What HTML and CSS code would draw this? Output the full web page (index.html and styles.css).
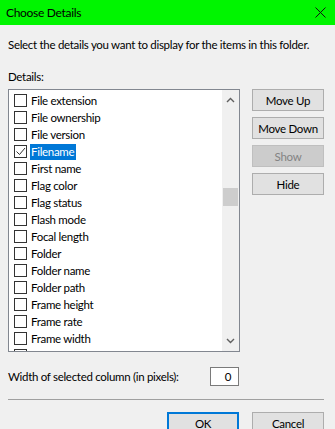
FILE: index.html
```html
<!DOCTYPE html>
<html lang="en">
<head>
  <meta charset="UTF-8" />
  <title>Choose Details</title>
  <link rel="stylesheet" href="styles.css">
</head>
<body>
  <div class="dialog">
    <div class="titlebar">
      <span class="title">Choose Details</span>
      <svg class="close" width="11" height="11" viewBox="0 0 11 11">
        <path d="M0.5 0.5 L10.5 10.5 M10.5 0.5 L0.5 10.5" stroke="#111" stroke-width="1" fill="none"/>
      </svg>
    </div>
    <div class="content">
      <p class="intro">Select the details you want to display for the items in this folder.</p>
      <p class="label">Details:</p>
      <div class="main">
        <div class="listbox">
          <div class="rows">
            <div class="row"><span class="check"></span><span class="name">File extension</span></div>
            <div class="row"><span class="check"></span><span class="name">File ownership</span></div>
            <div class="row"><span class="check"></span><span class="name">File version</span></div>
            <div class="row"><span class="check checked">
              <svg width="11" height="11" viewBox="0 0 11 11"><path d="M1.5 5.5 L4.5 8.5 L10 2" stroke="#333" stroke-width="1" fill="none"/></svg>
            </span><span class="name selected">Filename</span></div>
            <div class="row"><span class="check"></span><span class="name">First name</span></div>
            <div class="row"><span class="check"></span><span class="name">Flag color</span></div>
            <div class="row"><span class="check"></span><span class="name">Flag status</span></div>
            <div class="row"><span class="check"></span><span class="name">Flash mode</span></div>
            <div class="row"><span class="check"></span><span class="name">Focal length</span></div>
            <div class="row"><span class="check"></span><span class="name">Folder</span></div>
            <div class="row"><span class="check"></span><span class="name">Folder name</span></div>
            <div class="row"><span class="check"></span><span class="name">Folder path</span></div>
            <div class="row"><span class="check"></span><span class="name">Frame height</span></div>
            <div class="row"><span class="check"></span><span class="name">Frame rate</span></div>
            <div class="row"><span class="check"></span><span class="name">Frame width</span></div>
            <div class="row"><span class="check"></span><span class="name"></span></div>
          </div>
          <div class="scrollbar">
            <svg class="arrow" width="9" height="6" viewBox="0 0 9 6"><path d="M1 5 L4.5 1.5 L8 5" stroke="#606060" stroke-width="1.4" fill="none"/></svg>
            <div class="track"><div class="thumb"></div></div>
            <svg class="arrow" width="9" height="6" viewBox="0 0 9 6"><path d="M1 1 L4.5 4.5 L8 1" stroke="#606060" stroke-width="1.4" fill="none"/></svg>
          </div>
        </div>
        <div class="side-buttons">
          <button class="btn">Move Up</button>
          <button class="btn">Move Down</button>
          <button class="btn disabled">Show</button>
          <button class="btn">Hide</button>
        </div>
      </div>
      <div class="width-row">
        <span class="width-label">Width of selected column (in pixels):</span>
        <span class="num-input">0</span>
      </div>
      <div class="separator"></div>
      <div class="footer">
        <button class="btn default">OK</button>
        <button class="btn">Cancel</button>
      </div>
    </div>
  </div>
</body>
</html>
```

FILE: styles.css
```css
* {
  margin: 0;
  padding: 0;
  box-sizing: border-box;
}
body {
  background: #f0f0f0;
  font-family: 'Lato', sans-serif;
  font-size: 11.5px;
  letter-spacing: -0.3px;
  color: #000;
  overflow: hidden;
}
.dialog {
  width: 335px;
  height: 429px;
  overflow: hidden;
}
.titlebar {
  height: 25px;
  background: #00f500;
  display: flex;
  align-items: center;
  justify-content: space-between;
  padding: 0 9px 0 6px;
}
.title {
  font-size: 12px;
  line-height: 16px;
}
.close {
  display: block;
}
.content {
  padding: 0 11px 0 8px;
}
.intro {
  margin-top: 12px;
  line-height: 16px;
  white-space: nowrap;
}
.label {
  margin-top: 16px;
  line-height: 16px;
}
.main {
  display: flex;
  align-items: flex-start;
  margin-top: 4px;
}
.listbox {
  width: 232px;
  height: 263px;
  border: 1px solid #828790;
  background: #fff;
  display: flex;
  overflow: hidden;
}
.rows {
  flex: 1;
  padding: 2px 0 0 5px;
  overflow: hidden;
}
.row {
  height: 17px;
  display: flex;
  align-items: center;
}
.check {
  width: 13px;
  height: 13px;
  border: 1px solid #333;
  background: #fff;
  display: flex;
  align-items: center;
  justify-content: center;
}
.check svg {
  display: block;
}
.name {
  margin-left: 3px;
  padding: 0 2px 0 1px;
  line-height: 16px;
  white-space: nowrap;
}
.name.selected {
  background: #0078d7;
  color: #fff;
}
.scrollbar {
  width: 17px;
  background: #f0f0f0;
  display: flex;
  flex-direction: column;
  align-items: center;
}
.arrow {
  display: block;
  margin: 7px 0;
}
.track {
  flex: 1;
  width: 100%;
  padding-top: 78px;
}
.thumb {
  height: 18px;
  margin: 0 1px;
  background: #cdcdcd;
}
.side-buttons {
  margin-left: 12px;
  display: flex;
  flex-direction: column;
  gap: 6px;
}
.btn {
  width: 72px;
  height: 22px;
  font-family: 'Lato', sans-serif;
  font-size: 11.5px;
  letter-spacing: -0.3px;
  color: #000;
  background: #e1e1e1;
  border: 1px solid #adadad;
}
.btn.disabled {
  background: #cccccc;
  border-color: #bfbfbf;
  color: #838383;
}
.btn.default {
  border: 2px solid #0078d7;
}
.width-row {
  margin-top: 15px;
  display: flex;
  align-items: center;
  justify-content: space-between;
  width: 231px;
}
.width-label {
  white-space: nowrap;
}
.num-input {
  width: 29px;
  height: 19px;
  border: 1px solid #7a7a7a;
  background: #fff;
  text-align: right;
  padding-right: 7px;
  line-height: 17px;
}
.separator {
  margin-top: 13px;
  height: 1px;
  background: #a0a0a0;
}
.footer {
  margin-top: 12px;
  display: flex;
  justify-content: flex-end;
  gap: 13px;
}
```
